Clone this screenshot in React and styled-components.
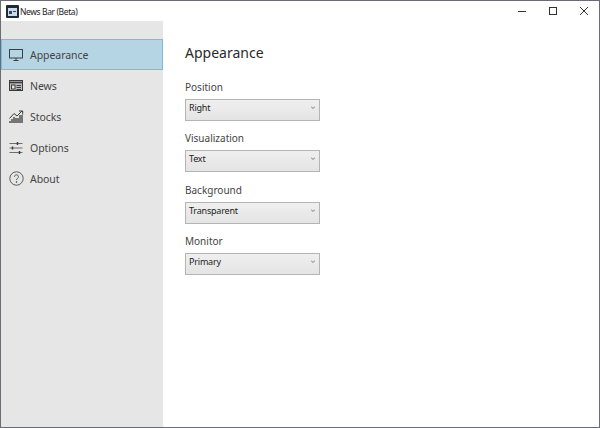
import React from 'react';
import styled, { createGlobalStyle } from 'styled-components';

const GlobalStyle = createGlobalStyle`
  html, body {
    margin: 0;
    padding: 0;
    background: #fff;
  }
  * {
    box-sizing: border-box;
  }
`;

const MonitorIcon = () => (
  <svg width="15" height="14" viewBox="0 0 15 14" fill="none" stroke="#3a3f44" strokeWidth="1">
    <rect x="0.5" y="1.5" width="13" height="8.500" />
    <path d="M7 10v2M4.500 12.500h5" />
  </svg>
);

const NewsIcon = () => (
  <svg width="15" height="14" viewBox="0 0 15 14" fill="none" stroke="#3a3a3a" strokeWidth="1">
    <rect x="0.5" y="1.5" width="13" height="10" fill="#bdbdbd" />
    <path d="M1 3.500h12" strokeWidth="1.600" />
    <rect x="2.500" y="6" width="3.500" height="4" fill="#e6e6e6" />
    <path d="M7.500 6.500h4.500M7.500 8.500h4.500M7.500 10.500h4.500" />
  </svg>
);

const StocksIcon = () => (
  <svg width="15" height="14" viewBox="0 0 15 14" fill="none" stroke="#3a3a3a" strokeWidth="1">
    <path d="M1 13v-2M3 13V9M5 13V7M7 13V8M9 13V8M11 13V5M13 13V5" strokeWidth="1.300" />
    <path d="M0.500 8.500L5 3.500l3 2.500 5-5" />
    <path d="M10 1h3.700v3.500" />
  </svg>
);

const OptionsIcon = () => (
  <svg width="15" height="14" viewBox="0 0 15 14" fill="#3a3a3a" stroke="#3a3a3a">
    <path d="M0.500 2.500h13M0.500 7h13M0.500 11.500h13" strokeWidth="0.700" />
    <path d="M8.500 1v3M3.500 5.500v3M10.500 10v3" strokeWidth="1.500" />
  </svg>
);

const AboutIcon = () => (
  <svg width="15" height="15" viewBox="0 0 15 15" fill="none" stroke="#3a3a3a" strokeWidth="0.800">
    <circle cx="7.500" cy="7.500" r="6.700" />
    <path d="M5.500 5.800c0-1.200.9-2 2-2s2 .8 2 1.900c0 1.700-2 1.600-2 3.400" />
    <circle cx="7.500" cy="11" r="0.400" fill="#3a3a3a" />
  </svg>
);

const navItems = [
  { label: 'Appearance', Icon: MonitorIcon, active: true },
  { label: 'News', Icon: NewsIcon },
  { label: 'Stocks', Icon: StocksIcon },
  { label: 'Options', Icon: OptionsIcon },
  { label: 'About', Icon: AboutIcon },
];

const fields = [
  { label: 'Position', value: 'Right' },
  { label: 'Visualization', value: 'Text' },
  { label: 'Background', value: 'Transparent' },
  { label: 'Monitor', value: 'Primary' },
];

const App = () => {
  return (
    <>
      <GlobalStyle />
      <Window>
        <TitleBar>
          <AppIcon>
            <svg width="13" height="13" viewBox="0 0 13 13">
              <rect width="13" height="13" rx="1" fill="#1b2a3d" />
              <rect x="2" y="3" width="9" height="8" fill="#cfd8e3" />
              <rect x="3" y="6" width="3" height="3" fill="#2a4a6b" />
              <rect x="7" y="6" width="3" height="1" fill="#2a4a6b" />
            </svg>
          </AppIcon>
          <Title>News Bar (Beta)</Title>
          <WindowControls>
            <ControlButton>
              <svg width="8" height="8" viewBox="0 0 8 8" stroke="#333" fill="none">
                <path d="M0 4.500h8" />
              </svg>
            </ControlButton>
            <ControlButton>
              <svg width="8" height="8" viewBox="0 0 8 8" stroke="#333" fill="none">
                <rect x="0.500" y="0.500" width="7" height="7" />
              </svg>
            </ControlButton>
            <ControlButton>
              <svg width="8" height="8" viewBox="0 0 8 8" stroke="#333" fill="none">
                <path d="M0 0l8 8M8 0l-8 8" />
              </svg>
            </ControlButton>
          </WindowControls>
        </TitleBar>
        <Body>
          <Sidebar>
            {navItems.map(({ label, Icon, active }) => (
              <NavItem key={label} $active={active}>
                <NavIcon><Icon /></NavIcon>
                <NavLabel>{label}</NavLabel>
              </NavItem>
            ))}
          </Sidebar>
          <Content>
            <Heading>Appearance</Heading>
            {fields.map((field) => (
              <Field key={field.label}>
                <FieldLabel>{field.label}</FieldLabel>
                <Select>
                  <span>{field.value}</span>
                  <svg width="4" height="3" viewBox="0 0 4 3" fill="none" stroke="#777">
                    <path d="M0 0.500L2 2.500l2-2" />
                  </svg>
                </Select>
              </Field>
            ))}
          </Content>
        </Body>
      </Window>
    </>
  );
};

export default App;

const Window = styled.div`
  width: 600px;
  height: 428px;
  display: flex;
  flex-direction: column;
  background: #fff;
  border: 1px solid #6a6c76;
  font-family: "Noto Sans", "Open Sans", sans-serif;
  overflow: hidden;
`;

const TitleBar = styled.div`
  height: 20px;
  flex: none;
  display: flex;
  align-items: center;
  padding-left: 5px;
`;

const AppIcon = styled.div`
  width: 13px;
  height: 13px;
  display: flex;
  margin-right: 1px;
`;

const Title = styled.div`
  font-size: 8.500px;
  letter-spacing: -0.400px;
  color: #222;
`;

const WindowControls = styled.div`
  margin-left: auto;
  display: flex;
`;

const ControlButton = styled.div`
  width: 31px;
  height: 20px;
  display: flex;
  align-items: center;
  justify-content: center;
`;

const Body = styled.div`
  flex: 1;
  display: flex;
  min-height: 0;
`;

const Sidebar = styled.div`
  width: 162px;
  background: #e6e6e6;
  padding-top: 18px;
  display: flex;
  flex-direction: column;
`;

const NavItem = styled.div`
  height: 31px;
  display: flex;
  align-items: center;
  padding-left: ${(p) => (p.$active ? '7px' : '8px')};
  background: ${(p) => (p.$active ? '#b6d5e4' : 'transparent')};
  border: ${(p) => (p.$active ? '1px solid #7dbbdc' : 'none')};
`;

const NavIcon = styled.div`
  width: 15px;
  height: 15px;
  display: flex;
  align-items: center;
  justify-content: center;
  margin-right: 6px;
`;

const NavLabel = styled.div`
  font-size: 10.500px;
  letter-spacing: -0.050px;
  color: #444;
`;

const Content = styled.div`
  flex: 1;
  padding: 21px 0 0 22px;
`;

const Heading = styled.div`
  font-size: 14px;
  line-height: 22px;
  color: #2a2a2a;
  margin-bottom: 16px;
`;

const Field = styled.div`
  margin-bottom: 10.300px;
`;

const FieldLabel = styled.div`
  font-size: 10px;
  line-height: 14px;
  color: #444;
  margin-bottom: 5px;
`;

const Select = styled.div`
  width: 135px;
  height: 22px;
  display: flex;
  align-items: center;
  justify-content: space-between;
  padding: 0 4px 5px 3px;
  background: linear-gradient(#efefef, #e4e4e4);
  border: 1px solid #b4b4b4;
  font-size: 9px;
  letter-spacing: -0.200px;
  color: #222;
`;
